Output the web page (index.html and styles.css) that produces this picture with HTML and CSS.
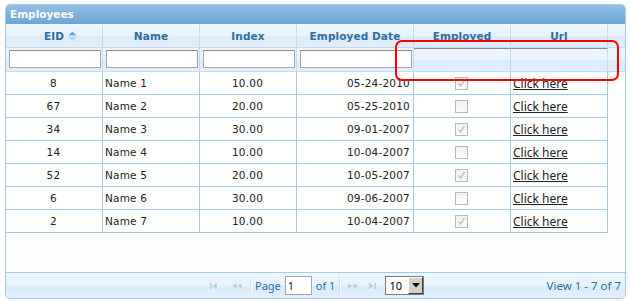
FILE: index.html
```html
<!DOCTYPE html>
<html lang="en">
<head>
    <meta charset="UTF-8">
    <title>Employees</title>
    <link rel="stylesheet" href="styles.css">
</head>
<body>
    <div class="grid">
        <div class="caption">Employees</div>

        <div class="hrow head">
            <div class="hc">EID<span class="sort"><svg width="9" height="10" viewBox="0 0 9 10"><path d="M0.5 4.5 L4.5 0.5 L8.5 4.5 Z" fill="#6aa5d8"/><path d="M0.5 6 L8.5 6 L4.5 10 Z" fill="#b9d5ee"/></svg></span></div>
            <div class="hc">Name</div>
            <div class="hc">Index</div>
            <div class="hc">Employed Date</div>
            <div class="hc">Employed</div>
            <div class="hc">Url</div>
            <div class="hc filler"></div>
        </div>

        <div class="hrow filter">
            <div class="hc"><input type="text"></div>
            <div class="hc"><input type="text"></div>
            <div class="hc"><input type="text"></div>
            <div class="hc"><input type="text"></div>
            <div class="hc blank"></div>
            <div class="hc blank"></div>
            <div class="hc filler"></div>
        </div>

        <div class="body" id="rows"></div>

        <div class="pager">
            <div></div>
            <div class="pg-group">
                <span class="pg-btn"><svg width="8" height="8" viewBox="0 0 8 8"><rect x="0" y="1" width="1.5" height="6" fill="#b4cde6"/><path d="M7 1 L7 7 L2.5 4 Z" fill="#b4cde6"/></svg></span>
                <span class="pg-btn prev"><svg width="12" height="8" viewBox="0 0 12 8"><path d="M5.5 1.5 L5.5 6.5 L1 4 Z M11 1.5 L11 6.5 L6.5 4 Z" fill="#b4cde6"/></svg></span>
                <span class="pg-sep"></span>
                <span class="pg-text">Page</span>
                <input class="pg-input" type="text" value="1">
                <span class="pg-total">of 1</span>
                <span class="pg-sep"></span>
                <span class="pg-btn"><svg width="12" height="8" viewBox="0 0 12 8"><path d="M1 1.5 L1 6.5 L5.5 4 Z M6.5 1.5 L6.5 6.5 L11 4 Z" fill="#b4cde6"/></svg></span>
                <span class="pg-btn last"><svg width="8" height="8" viewBox="0 0 8 8"><path d="M1 1 L1 7 L5.5 4 Z" fill="#b4cde6"/><rect x="6.5" y="1" width="1.5" height="6" fill="#b4cde6"/></svg></span>
                <span class="pg-select"><span class="pg-val">10</span><span class="pg-arrow"><svg width="8" height="5" viewBox="0 0 8 5"><path d="M0 0 L8 0 L4 4.5 Z" fill="#000"/></svg></span></span>
            </div>
            <div class="pg-info">View 1 - 7 of 7</div>
        </div>
    </div>

    <div class="mark"></div>

    <script>
        const employees = [
            { id: 8, name: 'Name 1', index: '10.00', date: '05-24-2010', employed: true },
            { id: 67, name: 'Name 2', index: '20.00', date: '05-25-2010', employed: false },
            { id: 34, name: 'Name 3', index: '30.00', date: '09-01-2007', employed: true },
            { id: 14, name: 'Name 4', index: '10.00', date: '10-04-2007', employed: false },
            { id: 52, name: 'Name 5', index: '20.00', date: '10-05-2007', employed: true },
            { id: 6, name: 'Name 6', index: '30.00', date: '09-06-2007', employed: false },
            { id: 2, name: 'Name 7', index: '10.00', date: '10-04-2007', employed: true }
        ];

        const rows = document.getElementById('rows');
        const check = '<svg width="9" height="9" viewBox="0 0 9 9"><path d="M1.5 4.5 L3.5 7 L7.5 1" stroke="#c4c4c4" stroke-width="1.4" fill="none"/></svg>';

        employees.forEach(emp => {
            const row = document.createElement('div');
            row.className = 'row';
            row.innerHTML =
                '<div class="c center">' + emp.id + '</div>' +
                '<div class="c">' + emp.name + '</div>' +
                '<div class="c center">' + emp.index + '</div>' +
                '<div class="c right">' + emp.date + '</div>' +
                '<div class="c center"><span class="cb">' + (emp.employed ? check : '') + '</span></div>' +
                '<div class="c"><a href="#">Click here</a></div>';
            rows.appendChild(row);
        });
    </script>
</body>
</html>
```

FILE: styles.css
```css
body {
    margin: 0;
    padding: 0;
    background: #fff;
    font-family: 'DejaVu Sans', sans-serif;
}
.grid {
    box-sizing: border-box;
    width: 621px;
    height: 295px;
    margin: 4px 0 0 5px;
    border: 1px solid #a6c9e2;
    border-radius: 5px;
    overflow: hidden;
    background: #fcfdfd;
    display: flex;
    flex-direction: column;
}
.caption {
    height: 19px;
    padding-left: 4px;
    background: linear-gradient(to bottom, #93c0e4 0%, #80b2dc 45%, #6ca6d5 100%);
    color: #fff;
    font-weight: bold;
    font-size: 10.5px;
    line-height: 19px;
}
.hrow {
    display: grid;
    grid-template-columns: 97px 97px 97px 117px 97px 97px 1fr;
    height: 24px;
    box-sizing: border-box;
    border-bottom: 1px solid #c5dbec;
    background: linear-gradient(to bottom, #eef6fe 0%, #e6f2fc 50%, #dceafa 52%, #e2effb 100%);
}
.hc {
    box-sizing: border-box;
    border-right: 1px solid #c5dbec;
    display: flex;
    align-items: center;
    justify-content: center;
}
.hc.filler {
    border-right: none;
}
.head .hc {
    color: #2e6e9e;
    font-weight: bold;
    font-size: 10.5px;
    letter-spacing: 0.1px;
}
.sort {
    display: inline-block;
    width: 9px;
    height: 10px;
    margin-left: 4px;
    margin-right: -13px;
    margin-top: 1px;
}
.sort svg {
    display: block;
}
.filter .hc {
    align-items: flex-start;
    justify-content: flex-start;
}
.filter input {
    box-sizing: border-box;
    width: 92px;
    height: 18px;
    margin: 2px 0 0 3px;
    border: 1px solid #a4a4a4;
    border-top-color: #8c8c8c;
    background: #fff;
    padding: 0;
}
.filter .hc:nth-child(4) input {
    width: 112px;
}
.filter .blank {
    border-top: 1px solid #8a8a8a;
}
.body {
    flex: 1;
    background: #fcfdfd;
}
.row {
    display: grid;
    grid-template-columns: 97px 97px 97px 117px 97px 97px;
    width: 602px;
    height: 23px;
    box-sizing: border-box;
    border-bottom: 1px solid #a6c9e2;
    background: #fff;
}
.c {
    box-sizing: border-box;
    border-right: 1px solid #a6c9e2;
    display: flex;
    align-items: center;
    padding: 0 3px 0 2px;
    font-size: 10.5px;
    color: #222;
    letter-spacing: 0.2px;
}
.c.center {
    justify-content: center;
}
.c.right {
    justify-content: flex-end;
}
.c a {
    color: #222;
    font-family: 'Noto Sans', sans-serif;
    font-size: 12px;
    letter-spacing: 0;
}
.cb {
    box-sizing: border-box;
    width: 13px;
    height: 13px;
    border: 1px solid #b8b8b8;
    background: linear-gradient(to bottom, #f2f2f2, #fafafa);
    display: flex;
    align-items: center;
    justify-content: center;
}
.pager {
    height: 26px;
    box-sizing: border-box;
    border-top: 1px solid #a6c9e2;
    background: linear-gradient(to bottom, #eef6fe 0%, #e6f2fc 50%, #dceafa 52%, #e2effb 100%);
    display: grid;
    grid-template-columns: 199px auto 1fr;
    align-items: center;
    font-family: 'Noto Sans', sans-serif;
    font-size: 11px;
    color: #2e6e9e;
}
.pg-group {
    display: flex;
    align-items: center;
}
.pg-btn {
    width: 18px;
    height: 18px;
    display: flex;
    align-items: center;
    justify-content: center;
}
.pg-btn.prev {
    margin-left: 5px;
}
.pg-btn.last {
    margin-left: 1px;
}
.pg-sep {
    width: 1px;
    height: 18px;
    margin: 0 3px 0 4px;
    background: #d2e3f2;
    border-right: 1px solid #f6fbff;
}
.pg-text {
    margin-right: 4px;
}
.pg-input {
    box-sizing: border-box;
    width: 27px;
    height: 19px;
    margin: 0 4px 0 0;
    padding: 0 2px;
    border: 1px solid #a4a4a4;
    font-family: 'Noto Sans', sans-serif;
    font-size: 11px;
    color: #222;
}
.pg-select {
    box-sizing: border-box;
    display: flex;
    width: 39px;
    height: 19px;
    margin-left: 4px;
    border: 1px solid #7a7a7a;
    background: #fff;
}
.pg-val {
    flex: 1;
    padding-left: 3px;
    font-size: 11px;
    line-height: 17px;
    color: #000;
}
.pg-arrow {
    width: 15px;
    box-sizing: border-box;
    background: #d4d0c8;
    border: 1px solid;
    border-color: #fff #404040 #404040 #fff;
    display: flex;
    align-items: center;
    justify-content: center;
}
.pg-arrow svg {
    display: block;
}
.pg-info {
    text-align: right;
    padding-right: 4px;
    font-size: 11.5px;
}
.mark {
    position: absolute;
    left: 395px;
    top: 40px;
    width: 224px;
    height: 41px;
    box-sizing: border-box;
    border: 2px solid #f00;
    border-radius: 7px;
}
```
